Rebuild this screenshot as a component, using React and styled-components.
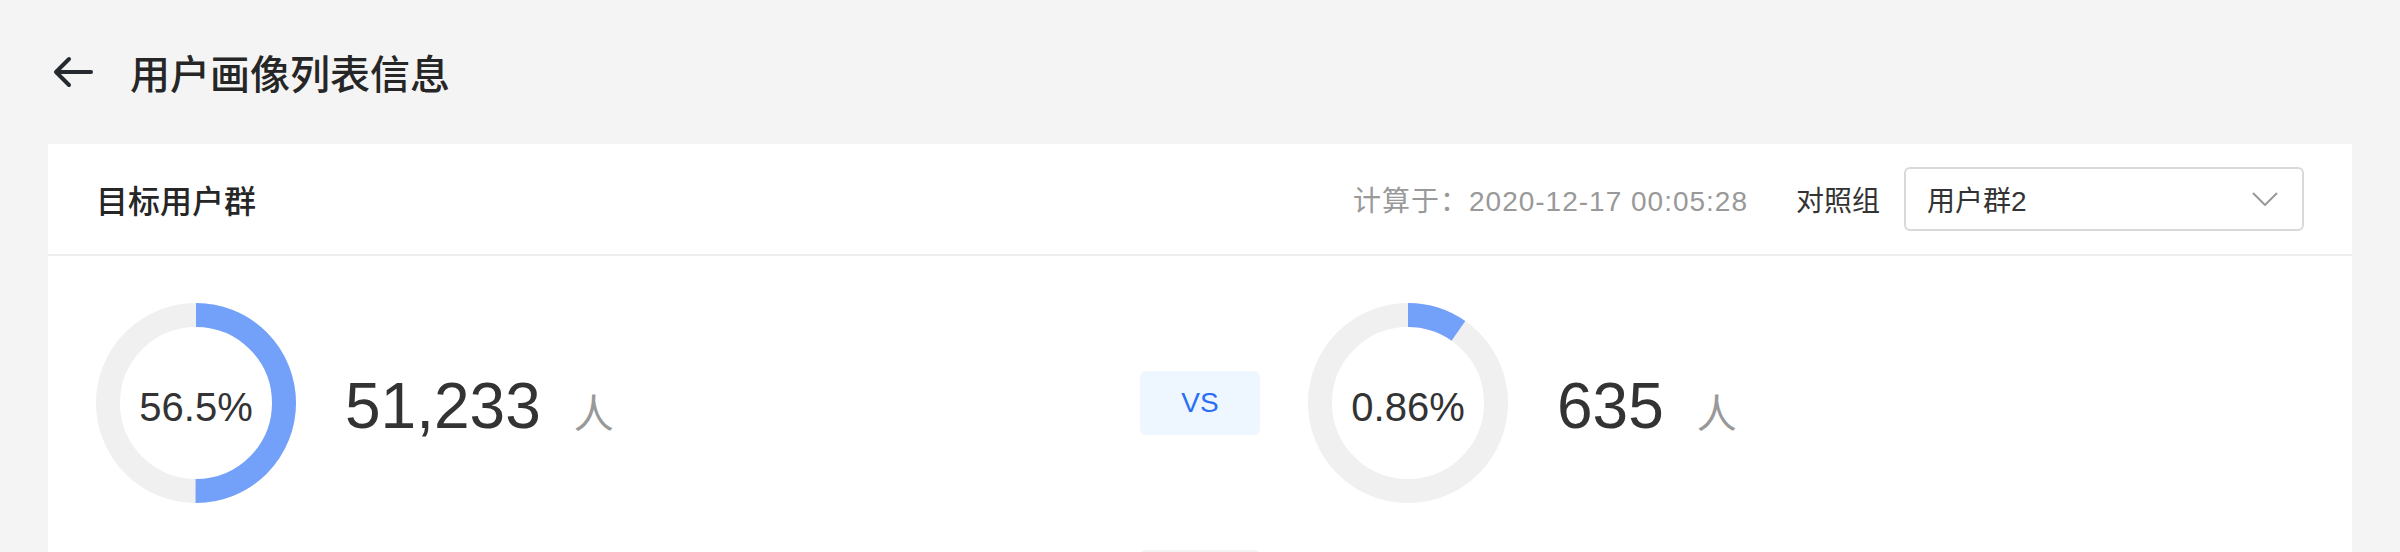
import React from "react";
import styled, { createGlobalStyle } from "styled-components";

const GlobalStyle = createGlobalStyle`
  html, body { margin: 0; padding: 0; background: #f4f4f4; }
  body { font-family: "Liberation Sans", "Noto Sans CJK SC", sans-serif; color: #333; }
`;

const Page = styled.div`
  padding: 0 48px;
`;

const PageHeader = styled.div`
  height: 144px;
  display: flex;
  align-items: center;
  gap: 34px;
`;

const BackButton = styled.button`
  width: 48px;
  height: 48px;
  padding: 0;
  border: 0;
  background: transparent;
  display: flex;
  align-items: center;
  justify-content: center;
  cursor: pointer;
`;

const PageTitle = styled.h1`
  margin: 0;
  font-size: 40px;
  font-weight: 500;
  color: #262626;
  font-family: "Noto Sans CJK SC", sans-serif;
`;

const Card = styled.section`
  background: #fff;
`;

const CardHeader = styled.div`
  height: 110px;
  border-bottom: 2px solid #eeeeee;
  padding: 0 48px;
  display: flex;
  align-items: center;
`;

const CardTitle = styled.h2`
  margin: 0;
  flex: 1;
  font-size: 32px;
  font-weight: 500;
  color: #262626;
  font-family: "Noto Sans CJK SC", sans-serif;
`;

const CalcTime = styled.span`
  font-size: 28px;
  color: #999;
  letter-spacing: 1px;
`;

const CompareLabel = styled.span`
  margin-left: 48px;
  font-size: 28px;
  color: #333;
  font-family: "Noto Sans CJK SC", sans-serif;
`;

const Select = styled.div`
  margin-left: 24px;
  box-sizing: border-box;
  width: 400px;
  height: 64px;
  border: 2px solid #d9d9d9;
  border-radius: 6px;
  padding: 0 24px 0 21px;
  display: flex;
  align-items: center;
  justify-content: space-between;
  font-size: 28px;
  color: #333;
`;

const StatRow = styled.div`
  display: flex;
  align-items: center;
  padding: 47px 48px;
`;

const StatSide = styled.div`
  flex: 1;
  display: flex;
  align-items: center;
  gap: 49px;
`;

const DonutWrap = styled.div`
  position: relative;
  width: 200px;
  height: 200px;
  flex-shrink: 0;
`;

const DonutLabel = styled.div`
  position: absolute;
  inset: 0;
  display: flex;
  align-items: center;
  justify-content: center;
  padding-top: 8px;
  box-sizing: border-box;
  font-size: 40px;
  line-height: 40px;
  color: #333;
`;

const Count = styled.div`
  display: flex;
  align-items: baseline;
  padding-top: 8px;
`;

const CountNumber = styled.span`
  font-size: 64px;
  line-height: 64px;
  color: #333;
`;

const CountUnit = styled.span`
  margin-left: 33px;
  font-size: 40px;
  color: #999;
  font-family: "Noto Sans CJK SC", sans-serif;
`;

const VsBadge = styled.div`
  width: 120px;
  height: 64px;
  margin: 0 48px;
  border-radius: 6px;
  background: #eef6ff;
  color: #2a6ef6;
  font-size: 28px;
  display: flex;
  align-items: center;
  justify-content: center;
`;

const NextRow = styled.div`
  display: flex;
  justify-content: center;
`;

const NextBadge = styled.div`
  width: 120px;
  height: 64px;
  border-radius: 6px;
  background: #f3f3f3;
`;

function Donut({ value, label }) {
  const r = 88;
  const c = 2 * Math.PI * r;
  return (
    <DonutWrap>
      <svg width="200" height="200" viewBox="0 0 200 200">
        <circle cx="100" cy="100" r={r} fill="none" stroke="#f0f0f0" strokeWidth="24" />
        <circle
          cx="100"
          cy="100"
          r={r}
          fill="none"
          stroke="#73a1fa"
          strokeWidth="24"
          strokeDasharray={`${c * value} ${c}`}
          transform="rotate(-90 100 100)"
        />
      </svg>
      <DonutLabel>{label}</DonutLabel>
    </DonutWrap>
  );
}

function Stat({ value, label, count }) {
  return (
    <StatSide>
      <Donut value={value} label={label} />
      <Count>
        <CountNumber>{count}</CountNumber>
        <CountUnit>人</CountUnit>
      </Count>
    </StatSide>
  );
}

export default function App() {
  return (
    <>
      <GlobalStyle />
      <Page>
        <PageHeader>
          <BackButton aria-label="返回">
            <svg width="48" height="48" viewBox="0 0 48 48" fill="none" stroke="#262a30" strokeWidth="4" strokeLinecap="round" strokeLinejoin="round">
              <path d="M9 24H43" />
              <path d="M21 11L8 24L21 37" />
            </svg>
          </BackButton>
          <PageTitle>用户画像列表信息</PageTitle>
        </PageHeader>
        <Card>
          <CardHeader>
            <CardTitle>目标用户群</CardTitle>
            <CalcTime>计算于：2020-12-17 00:05:28</CalcTime>
            <CompareLabel>对照组</CompareLabel>
            <Select>
              <span>用户群2</span>
              <svg width="26" height="14" viewBox="0 0 26 14" fill="none" stroke="#999" strokeWidth="2">
                <path d="M1 1L13 13L25 1" />
              </svg>
            </Select>
          </CardHeader>
          <StatRow>
            <Stat value={0.5} label="56.5%" count="51,233" />
            <VsBadge>VS</VsBadge>
            <Stat value={0.097} label="0.86%" count="635" />
          </StatRow>
          <NextRow>
            <NextBadge />
          </NextRow>
        </Card>
      </Page>
    </>
  );
}
